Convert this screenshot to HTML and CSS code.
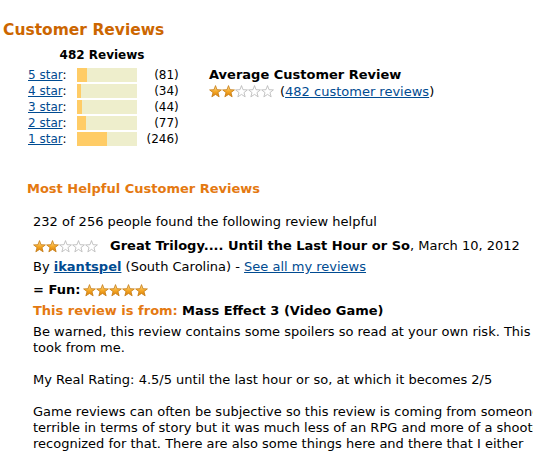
FILE: index.html
```html
<!DOCTYPE html>
<html lang="en">
<head>
  <meta charset="UTF-8">
  <title>Customer Reviews</title>
  <link rel="stylesheet" href="styles.css">
</head>
<body>
  <!-- Star shapes, reused below -->
  <svg class="defs" width="0" height="0" aria-hidden="true">
    <defs>
      <linearGradient id="gold" x1="0" y1="0" x2="0" y2="1">
        <stop offset="0" stop-color="#ffe39a"/>
        <stop offset="0.55" stop-color="#f5a623"/>
        <stop offset="1" stop-color="#d9800c"/>
      </linearGradient>
      <symbol id="star-full" viewBox="0 0 13 13">
        <path d="M6.5 .6L8.03 4.7L12.4 4.88L8.97 7.6L10.15 11.82L6.5 9.4L2.85 11.82L4.03 7.6L.6 4.88L4.97 4.7Z" fill="url(#gold)" stroke="#c47a12" stroke-width="0.8" stroke-linejoin="round"/>
      </symbol>
      <symbol id="star-empty" viewBox="0 0 13 13">
        <path d="M6.5 .6L8.03 4.7L12.4 4.88L8.97 7.6L10.15 11.82L6.5 9.4L2.85 11.82L4.03 7.6L.6 4.88L4.97 4.7Z" fill="#fff" stroke="#b5b5b5" stroke-width="0.8" stroke-linejoin="round"/>
      </symbol>
    </defs>
  </svg>

  <div class="reviews">
    <h2 class="reviews-title">Customer Reviews</h2>

    <div class="summary">
      <div class="histogram">
        <div class="histogram-total">482 Reviews</div>
        <div class="histogram-rows">
          <span><a href="#">5 star</a>:</span>
          <span class="bar"><span class="bar-fill" style="width: 16.8%"></span></span>
          <span class="count">(81)</span>

          <span><a href="#">4 star</a>:</span>
          <span class="bar"><span class="bar-fill" style="width: 7.1%"></span></span>
          <span class="count">(34)</span>

          <span><a href="#">3 star</a>:</span>
          <span class="bar"><span class="bar-fill" style="width: 9.1%"></span></span>
          <span class="count">(44)</span>

          <span><a href="#">2 star</a>:</span>
          <span class="bar"><span class="bar-fill" style="width: 16%"></span></span>
          <span class="count">(77)</span>

          <span><a href="#">1 star</a>:</span>
          <span class="bar"><span class="bar-fill" style="width: 51%"></span></span>
          <span class="count">(246)</span>
        </div>
      </div>

      <div class="average">
        <div class="average-title">Average Customer Review</div>
        <div class="average-line">
          <span class="stars">
            <svg><use href="#star-full"/></svg><svg><use href="#star-full"/></svg><svg><use href="#star-empty"/></svg><svg><use href="#star-empty"/></svg><svg><use href="#star-empty"/></svg>
          </span>
          <span>(<a href="#">482 customer reviews</a>)</span>
        </div>
      </div>
    </div>

    <h3 class="helpful-title">Most Helpful Customer Reviews</h3>

    <div class="review">
      <div class="review-votes">232 of 256 people found the following review helpful</div>

      <div class="review-head">
        <span class="stars">
          <svg><use href="#star-full"/></svg><svg><use href="#star-full"/></svg><svg><use href="#star-empty"/></svg><svg><use href="#star-empty"/></svg><svg><use href="#star-empty"/></svg>
        </span>
        <span><b>Great Trilogy.... Until the Last Hour or So</b>, March 10, 2012</span>
      </div>

      <div class="review-author">
        By <a href="#" class="author-name">ikantspel</a> (South Carolina) - <a href="#">See all my reviews</a>
      </div>

      <div class="review-fun">
        <b>= Fun:</b>
        <span class="stars">
          <svg><use href="#star-full"/></svg><svg><use href="#star-full"/></svg><svg><use href="#star-full"/></svg><svg><use href="#star-full"/></svg><svg><use href="#star-full"/></svg>
        </span>
      </div>

      <div class="review-from">
        <b class="from-label">This review is from:</b> <b>Mass Effect 3 (Video Game)</b>
      </div>

      <div class="review-body">
        Be warned, this review contains some spoilers so read at your own risk. This is what the ending<br>
        took from me.<br>
        <br>
        My Real Rating: 4.5/5 until the last hour or so, at which it becomes 2/5<br>
        <br>
        Game reviews can often be subjective so this review is coming from someone<br>
        terrible in terms of story but it was much less of an RPG and more of a shooter<br>
        recognized for that. There are also some things here and there that I either
      </div>
    </div>
  </div>
</body>
</html>
```
FILE: styles.css
```css
:root {
  --title-orange: #cc6600;
  --orange: #e47911;
  --link: #004b91;
  --bar-bg: #eeeecc;
  --bar-fill: #ffcc66;
}

body {
  margin: 0;
  padding: 0;
  font-family: "DejaVu Sans", Verdana, sans-serif;
  font-size: 13px;
  color: #000;
  background: #fff;
  overflow: hidden;
}

a {
  color: var(--link);
}

.defs {
  position: absolute;
}

.reviews {
  padding: 20px 0 0 3px;
  white-space: nowrap;
}

.reviews-title {
  margin: 0;
  font-size: 15.5px;
  line-height: 20px;
  color: var(--title-orange);
}

/* Summary: histogram + average */
.summary {
  display: flex;
  margin-top: 7px;
}

.histogram {
  margin-left: 25px;
  width: 148px;
  font-size: 12px;
}

.histogram-total {
  font-weight: bold;
  text-align: center;
  line-height: 16px;
  margin-bottom: 5px;
}

.histogram-rows {
  display: grid;
  grid-template-columns: auto 60px 1fr;
  column-gap: 10px;
  row-gap: 2px;
  align-items: center;
  line-height: 14px;
}

.bar {
  display: block;
  height: 14px;
  background: var(--bar-bg);
}

.bar-fill {
  display: block;
  height: 100%;
  background: var(--bar-fill);
}

.count {
  text-align: right;
}

.average {
  margin-left: 33px;
  padding-top: 20px;
}

.average-title {
  font-weight: bold;
  line-height: 16px;
}

.average-line {
  display: flex;
  align-items: center;
  gap: 6px;
  line-height: 17px;
}

.stars {
  display: inline-flex;
  vertical-align: middle;
}

.stars svg {
  width: 13px;
  height: 13px;
}

/* Most helpful review */
.helpful-title {
  margin: 35px 0 0 24px;
  font-size: 13px;
  line-height: 16px;
  color: var(--orange);
}

.review {
  margin: 17px 0 0 30px;
  line-height: 16px;
}

.review-head {
  display: flex;
  align-items: center;
  gap: 12px;
  margin-top: 8px;
}

.review-author {
  margin-top: 5px;
}

.author-name {
  font-weight: bold;
}

.review-fun {
  display: flex;
  align-items: center;
  gap: 3px;
  margin-top: 7px;
}

.review-from {
  margin-top: 5px;
}

.from-label {
  color: var(--orange);
}

.review-body {
  margin-top: 5px;
}
```
